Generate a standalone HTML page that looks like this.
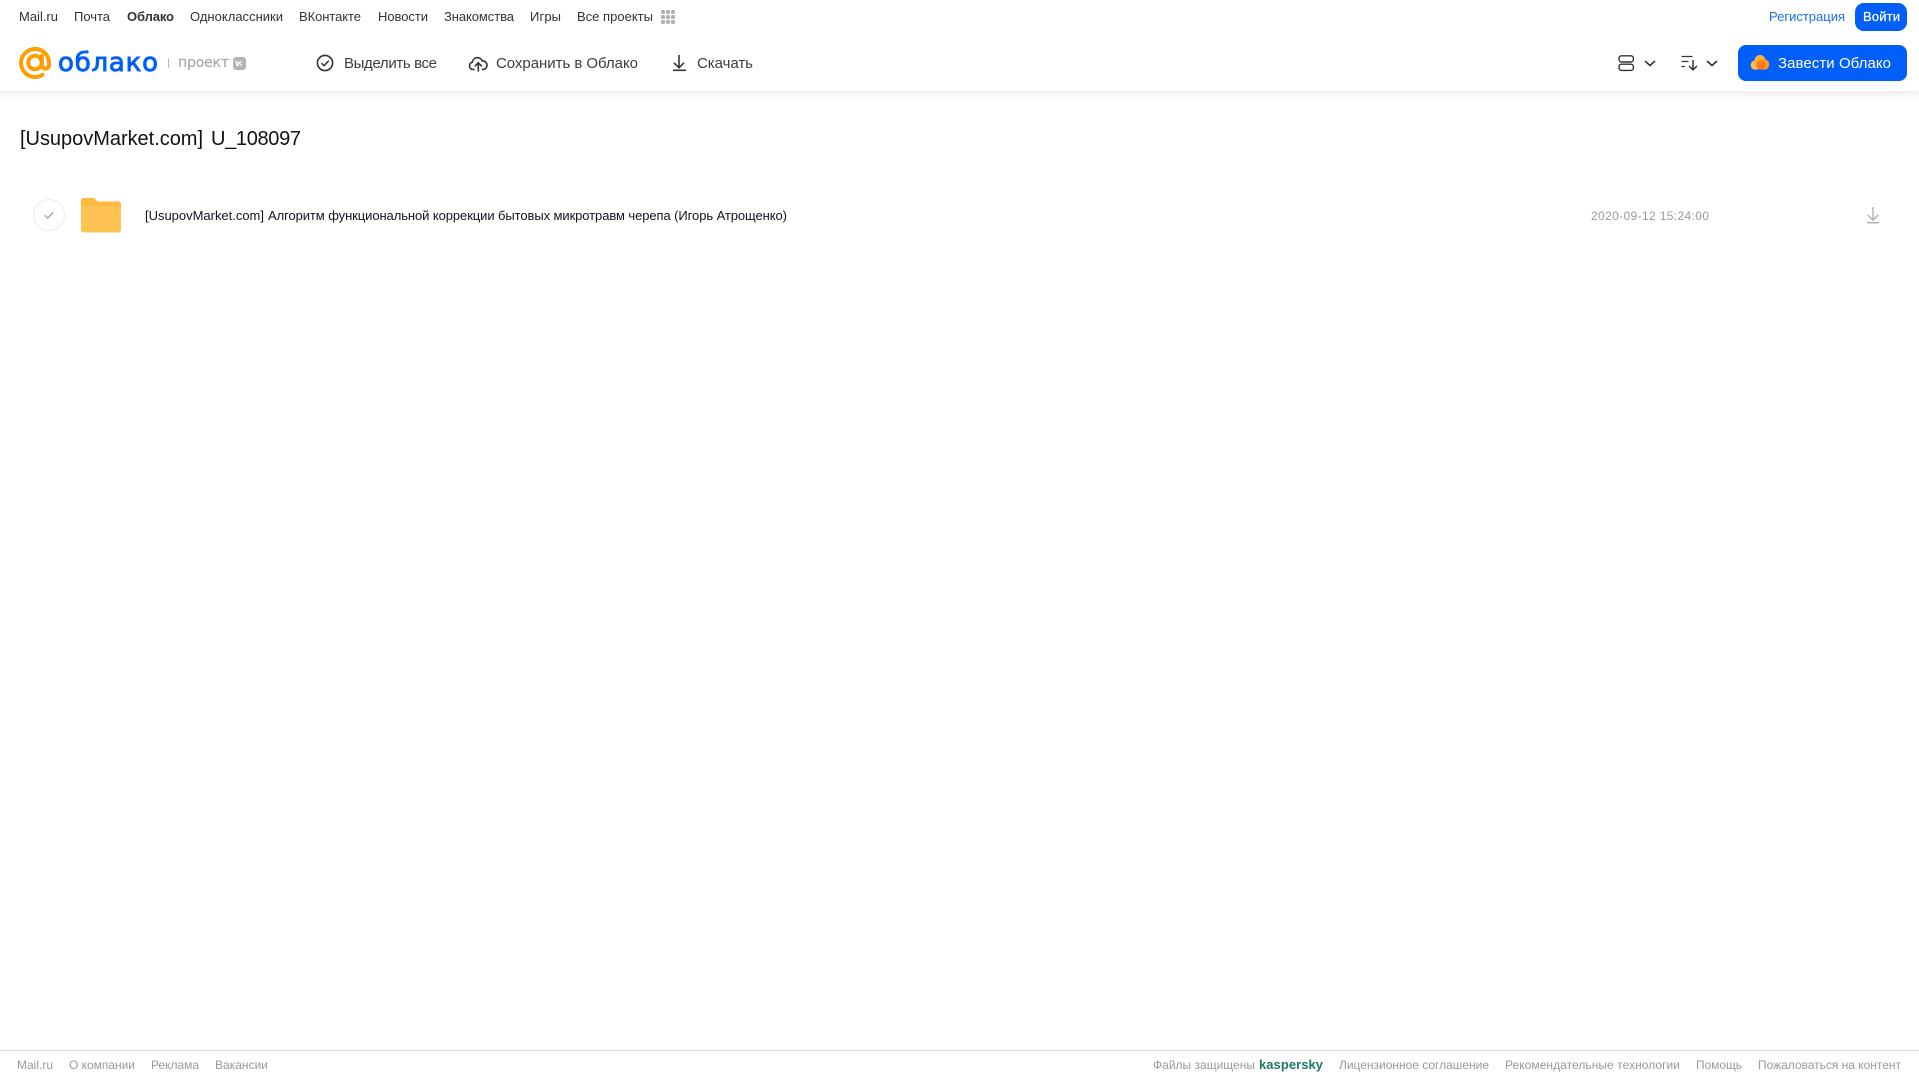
<!DOCTYPE html>
<html lang="ru">
<head>
<meta charset="utf-8">
<title>Облако</title>
<style>
html,body{margin:0;padding:0;background:#fff;width:1919px;height:1079px;overflow:hidden}
svg{position:absolute;left:0;top:0;display:block}
text{font-family:"Liberation Sans",Arial,sans-serif}
.n{font-size:13px;fill:#333}
.a{font-size:15px;fill:#3d3d3d}
.f{font-size:12px;fill:#999}
</style>
</head>
<body>
<svg width="1919" height="1079" viewBox="0 0 1919 1079" xmlns="http://www.w3.org/2000/svg">
<defs>
<linearGradient id="sh" x1="0" y1="0" x2="0" y2="1"><stop offset="0" stop-color="#f0f0f0"/><stop offset="1" stop-color="#ffffff"/></linearGradient>
</defs>
<rect x="0" y="91" width="1919" height="9" fill="url(#sh)"/>

<!-- top nav -->
<text class="n" x="19" y="21" textLength="39">Mail.ru</text>
<text class="n" x="74" y="21" textLength="36">Почта</text>
<text class="n" x="127" y="21" textLength="47" font-weight="700">Облако</text>
<text class="n" x="190" y="21" textLength="93">Одноклассники</text>
<text class="n" x="299" y="21" textLength="62">ВКонтакте</text>
<text class="n" x="378" y="21" textLength="50">Новости</text>
<text class="n" x="444" y="21" textLength="70">Знакомства</text>
<text class="n" x="530" y="21" textLength="31">Игры</text>
<text class="n" x="577" y="21" textLength="76">Все проекты</text>
<g fill="#b0b0b0">
<rect x="661" y="10" width="4" height="4" rx="1.500"/><rect x="666" y="10" width="4" height="4" rx="1.500"/><rect x="671" y="10" width="4" height="4" rx="1.500"/>
<rect x="661" y="15" width="4" height="4" rx="1.500"/><rect x="666" y="15" width="4" height="4" rx="1.500"/><rect x="671" y="15" width="4" height="4" rx="1.500"/>
<rect x="661" y="20" width="4" height="4" rx="1.500"/><rect x="666" y="20" width="4" height="4" rx="1.500"/><rect x="671" y="20" width="4" height="4" rx="1.500"/>
</g>
<text class="n" x="1769" y="21" textLength="76" style="fill:#1a6fe8">Регистрация</text>
<rect x="1855" y="3" width="52" height="28" rx="9" fill="#005ff9"/>
<text class="n" x="1863" y="21" textLength="37" style="fill:#fff;stroke:#fff;stroke-width:.25">Войти</text>

<!-- logo -->
<circle cx="35" cy="62.500" r="6.800" fill="none" stroke="#ff9e00" stroke-width="4"/>
<path d="M41.800 56v9a3.600 3.600 0 0 0 7.200 0V62.500A14 14 0 1 0 42.500 74.800" fill="none" stroke="#ff9e00" stroke-width="4" stroke-linecap="round"/>
<text x="58" y="71" textLength="100" style="font-family:'DejaVu Sans','Liberation Sans',sans-serif;font-size:26px;fill:#005ff9;stroke:#005ff9;stroke-width:.9">облако</text>
<rect x="168" y="58" width="1" height="10" fill="#bbb"/>
<text x="178" y="67" textLength="51" style="font-family:'DejaVu Sans','Liberation Sans',sans-serif;font-size:14px;fill:#aaa;stroke:#aaa;stroke-width:.2">проект</text>
<rect x="233" y="57" width="13" height="13" rx="3" fill="#b5b5b5"/>
<path d="M235.500 61l1.600 4.500h1V61m3.500 0l-2.400 2.200 2.600 2.300" fill="none" stroke="#fff" stroke-width="1.100"/>

<!-- actions -->
<circle cx="325" cy="63" r="7.600" fill="none" stroke="#333" stroke-width="1.600"/>
<path d="M321.500 63.200l2.600 2.500 4.600-4.900" fill="none" stroke="#333" stroke-width="1.500"/>
<text class="a" x="344" y="68" textLength="93">Выделить все</text>

<path d="M474 69.500h-.8a3.700 3.700 0 0 1-.9-7.300 5.200 5.200 0 0 1 10-1.200 4.200 4.200 0 0 1 .9 8.500h-.8" fill="none" stroke="#333" stroke-width="1.600" stroke-linecap="round"/>
<path d="M478.300 71.500V63M474.800 66.300l3.500-3.500 3.500 3.500" fill="none" stroke="#333" stroke-width="1.600"/>
<text class="a" x="496" y="68" textLength="142">Сохранить в Облако</text>

<path d="M679 55v12.500M674 62.800l5 5 5-5" fill="none" stroke="#333" stroke-width="1.600"/>
<rect x="673" y="69.500" width="13" height="1.600" fill="#333"/>
<text class="a" x="697" y="68" textLength="56">Скачать</text>

<!-- right tools -->
<rect x="1619" y="55.800" width="14.400" height="6.200" rx="2.500" fill="none" stroke="#333" stroke-width="1.400"/>
<rect x="1619" y="64.200" width="14.400" height="6.200" rx="2.500" fill="none" stroke="#333" stroke-width="1.400"/>
<path d="M1645 61l5 4.500 5-4.500" fill="none" stroke="#333" stroke-width="1.600"/>
<path d="M1681.500 56.500h11M1681.500 61.500h7M1681.500 66.500h3.500" fill="none" stroke="#333" stroke-width="1.300"/>
<path d="M1693 60v9.500M1689 66l4 3.800 4-3.800" fill="none" stroke="#333" stroke-width="1.500"/>
<path d="M1707 61l5 4.500 5-4.500" fill="none" stroke="#333" stroke-width="1.600"/>

<rect x="1738" y="45" width="169" height="36" rx="8" fill="#005ff9"/>
<circle cx="1755.500" cy="65" r="4.800" fill="#ffbd4a"/>
<circle cx="1760" cy="60.500" r="5.500" fill="#ffb03a"/>
<circle cx="1764" cy="64.500" r="5.300" fill="#ff9a2e"/>
<circle cx="1761" cy="65" r="4.800" fill="#ff7a1a"/>
<text class="a" x="1778" y="68" textLength="113" style="fill:#fff">Завести Облако</text>

<!-- title -->
<text x="20" y="145" textLength="183" style="font-size:20px;fill:#111">[UsupovMarket.com]</text>
<text x="211" y="145" textLength="90" style="font-size:20px;fill:#111">U_108097</text>

<!-- row -->
<circle cx="49" cy="215" r="15.500" fill="#fff" stroke="#ececec" stroke-width="1"/>
<path d="M44.800 215.200l2.900 2.900 5.400-5.600" fill="none" stroke="#a5a5a5" stroke-width="1.400"/>
<path d="M81 200.500a2.500 2.500 0 0 1 2.500-2.500h9.500a3 3 0 0 1 2.200 1l2.300 2.500h21a2.500 2.500 0 0 1 2.500 2.500v6H81z" fill="#ffb93c"/>
<path d="M81 206.500h40V230a2.500 2.500 0 0 1-2.500 2.500h-35A2.500 2.500 0 0 1 81 230z" fill="#ffc354"/>
<text x="145" y="220" textLength="119" style="font-size:13px;fill:#1a1020">[UsupovMarket.com]</text>
<text x="268" y="220" textLength="519" style="font-size:13px;fill:#1a1020">Алгоритм функциональной коррекции бытовых микротравм черепа (Игорь Атрощенко)</text>
<text x="1591" y="220" textLength="118" style="font-size:12px;fill:#999">2020-09-12 15:24:00</text>
<path d="M1873 207v13M1867.800 215l5.200 5.200 5.200-5.200" fill="none" stroke="#aaa" stroke-width="1.300"/>
<rect x="1867" y="222" width="12" height="1.400" fill="#aaa"/>

<!-- footer -->
<rect x="0" y="1050" width="1919" height="1" fill="#d9d9d9"/>
<text class="f" x="17" y="1069" textLength="36">Mail.ru</text>
<text class="f" x="69" y="1069" textLength="66">О компании</text>
<text class="f" x="151" y="1069" textLength="48">Реклама</text>
<text class="f" x="215" y="1069" textLength="53">Вакансии</text>
<text class="f" x="1153" y="1069" textLength="102">Файлы защищены</text>
<text x="1259" y="1069" textLength="64" style="font-size:13px;fill:#1c7a62;font-weight:700">kaspersky</text>
<text class="f" x="1339" y="1069" textLength="150">Лицензионное соглашение</text>
<text class="f" x="1505" y="1069" textLength="175">Рекомендательные технологии</text>
<text class="f" x="1696" y="1069" textLength="46">Помощь</text>
<text class="f" x="1758" y="1069" textLength="143">Пожаловаться на контент</text>
</svg>
</body>
</html>
